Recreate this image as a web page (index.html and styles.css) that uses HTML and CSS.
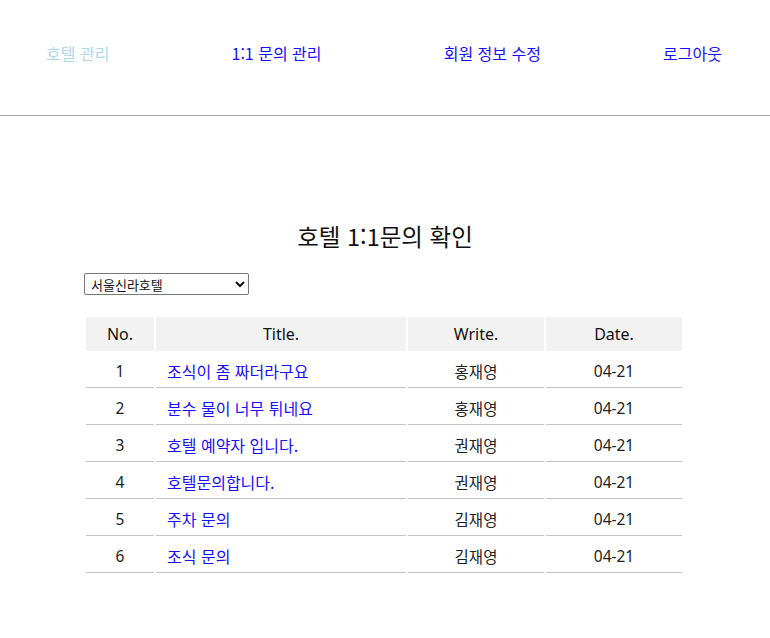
FILE: index.html
```html
<!DOCTYPE html>
<html lang="ko">
<head>
<meta charset="utf-8">
<title>호텔 1:1문의 확인</title>
<link rel="stylesheet" href="styles.css">
</head>
<body>
<header class="site-header">
  <nav class="nav">
    <a class="nav-link nav-link--current" href="#">호텔 관리</a>
    <a class="nav-link" href="#">1:1 문의 관리</a>
    <a class="nav-link" href="#">회원 정보 수정</a>
    <a class="nav-link" href="#">로그아웃</a>
  </nav>
</header>
<main class="board">
  <h2 class="board-title">호텔 1:1문의 확인</h2>
  <div class="filter">
    <select class="hotel-select">
      <option>서울신라호텔</option>
    </select>
  </div>
  <table class="qna-table">
    <thead>
      <tr>
        <th class="col-no">No.</th>
        <th class="col-title">Title.</th>
        <th class="col-writer">Write.</th>
        <th class="col-date">Date.</th>
      </tr>
    </thead>
    <tbody>
      <tr><td class="num">1</td><td class="title"><a href="#">조식이 좀 짜더라구요</a></td><td class="ko">홍재영</td><td class="num">04-21</td></tr>
      <tr><td class="num">2</td><td class="title"><a href="#">분수 물이 너무 튀네요</a></td><td class="ko">홍재영</td><td class="num">04-21</td></tr>
      <tr><td class="num">3</td><td class="title"><a href="#">호텔 예약자 입니다.</a></td><td class="ko">권재영</td><td class="num">04-21</td></tr>
      <tr><td class="num">4</td><td class="title"><a href="#">호텔문의합니다.</a></td><td class="ko">권재영</td><td class="num">04-21</td></tr>
      <tr><td class="num">5</td><td class="title"><a href="#">주차 문의</a></td><td class="ko">김재영</td><td class="num">04-21</td></tr>
      <tr><td class="num">6</td><td class="title"><a href="#">조식 문의</a></td><td class="ko">김재영</td><td class="num">04-21</td></tr>
    </tbody>
  </table>
</main>
</body>
</html>
```
FILE: styles.css
```css
* { box-sizing: border-box; }

body {
  margin: 0;
  background: #fff;
  color: #111;
  font-family: "Noto Sans", "Noto Sans CJK KR", sans-serif;
}

.site-header {
  height: 116px;
  border-bottom: 1px solid #a0a0a0;
  padding-top: 42px;
}

.nav {
  display: flex;
  justify-content: space-between;
  padding: 0 48px 0 46px;
}

.nav-link {
  font-family: "Noto Sans CJK KR", sans-serif;
  font-size: 16px;
  line-height: 22px;
  color: #1a0dff;
  text-decoration: none;
}

.nav-link--current {
  color: #add8e6;
}

.board {
  width: 602px;
  margin: 0 auto;
  padding-top: 103px;
}

.board-title {
  margin: 0;
  text-align: center;
  font-family: "Noto Sans CJK KR", sans-serif;
  font-size: 23.5px;
  font-weight: 400;
  line-height: 34px;
  color: #111;
}

.filter {
  margin-top: 20px;
}

.hotel-select {
  width: 165px;
  height: 22px;
  font-family: "Noto Sans CJK KR", sans-serif;
  font-size: 13px;
  color: #111;
  border: 1px solid #767676;
  border-radius: 2px;
  background: #fff;
  padding: 0 2px;
}

.qna-table {
  margin-top: 20px;
  width: 600px;
  border-collapse: separate;
  border-spacing: 2px;
  table-layout: fixed;
}

.qna-table th {
  background: #f2f2f2;
  font-weight: 400;
  font-size: 16px;
  line-height: 24px;
  height: 34px;
  padding: 5px 0;
  text-align: center;
  color: #111;
}

.col-no { width: 68px; }
.col-title { width: 250px; }
.col-writer { width: 136px; }
.col-date { width: 136px; }

.qna-table td {
  height: 35px;
  padding: 5px 0 4px;
  line-height: 24px;
  border-bottom: 1px solid #c4c4c4;
  text-align: center;
  color: #222;
}

.qna-table td.num {
  font-size: 15.5px;
}

.qna-table td.ko {
  font-family: "Noto Sans CJK KR", sans-serif;
  font-size: 15.5px;
}

.qna-table td.title {
  text-align: left;
  padding-left: 11px;
  font-family: "Noto Sans CJK KR", sans-serif;
  font-size: 16px;
}

.qna-table td.title a {
  color: #1a0dff;
  text-decoration: none;
}
```
